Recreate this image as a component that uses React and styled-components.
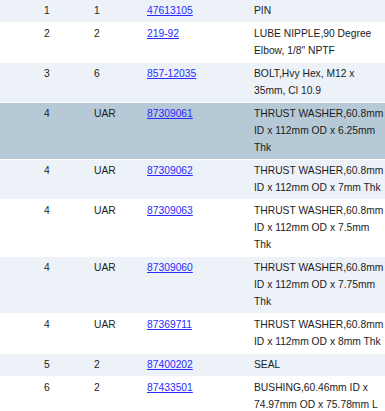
import React from "react";
import styled, { createGlobalStyle } from "styled-components";

const Global = createGlobalStyle`
  html, body { margin: 0; padding: 0; background: #fff; overflow: hidden; }
  body { font-family: "Liberation Sans", Arial, sans-serif; }
`;

const Table = styled.table`
  width: 385px;
  table-layout: fixed;
  border-collapse: collapse;
  font-size: 10.3px;
  line-height: 17px;
  color: #1c1c1c;
`;

const Col = styled.col`
  width: ${(p) => p.$w}px;
`;

const Row = styled.tr`
  background: ${(p) => (p.$selected ? "#b5c9d6" : p.$alt ? "#edf2f9" : "#ffffff")};
  border-bottom: 1px solid #fff;
`;

const Cell = styled.td`
  padding: 2px 0 3px ${(p) => p.$indent || 0}px;
  vertical-align: top;
  text-align: left;
`;

const PartLink = styled.a`
  color: #2b2bff;
  text-decoration: underline;
`;

const columns = [94, 53, 107, 131];

const rows = [
  ["1", "1", "47613105", "PIN"],
  ["2", "2", "219-92", "LUBE NIPPLE,90 Degree Elbow, 1/8\" NPTF"],
  ["3", "6", "857-12035", "BOLT,Hvy Hex, M12 x 35mm, Cl 10.9"],
  ["4", "UAR", "87309061", "THRUST WASHER,60.8mm ID x 112mm OD x 6.25mm Thk", true],
  ["4", "UAR", "87309062", "THRUST WASHER,60.8mm ID x 112mm OD x 7mm Thk"],
  ["4", "UAR", "87309063", "THRUST WASHER,60.8mm ID x 112mm OD x 7.5mm Thk"],
  ["4", "UAR", "87309060", "THRUST WASHER,60.8mm ID x 112mm OD x 7.75mm Thk"],
  ["4", "UAR", "87369711", "THRUST WASHER,60.8mm ID x 112mm OD x 8mm Thk"],
  ["5", "2", "87400202", "SEAL"],
  ["6", "2", "87433501", "BUSHING,60.46mm ID x 74.97mm OD x 75.78mm L"],
];

export default function App() {
  return (
    <>
      <Global />
      <Table>
        <colgroup>
          {columns.map((w, i) => (
            <Col key={i} $w={w} />
          ))}
        </colgroup>
        <tbody>
          {rows.map(([ref, qty, part, desc, sel], i) => (
            <Row key={i} $alt={i % 2 === 0} $selected={sel}>
              <Cell $indent={44}>{ref}</Cell>
              <Cell>{qty}</Cell>
              <Cell>
                <PartLink href="#">{part}</PartLink>
              </Cell>
              <Cell>{desc}</Cell>
            </Row>
          ))}
        </tbody>
      </Table>
    </>
  );
}
